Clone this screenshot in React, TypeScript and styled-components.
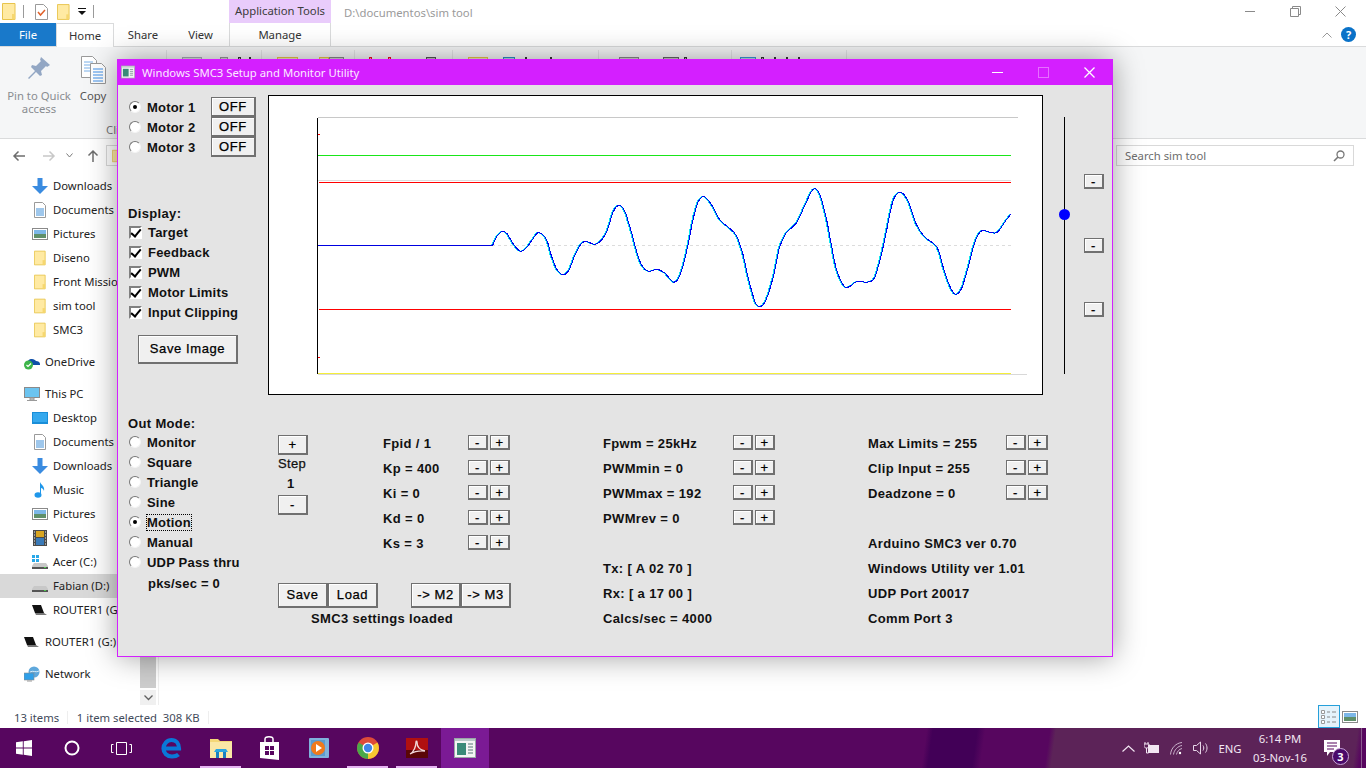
import React from 'react';
import styled, { createGlobalStyle } from 'styled-components';

const UI_FONT = '"Noto Sans", "Open Sans", sans-serif';
const FORM_FONT = '"Liberation Sans", Arial, sans-serif';

// ---------------------------------------------------------------------------
// Global + explorer frame
// ---------------------------------------------------------------------------

const Global = createGlobalStyle`
  html, body { margin: 0; padding: 0; background: #fff; }
  * { box-sizing: border-box; }
`;

const Page = styled.div`
  position: relative;
  width: 1366px;
  height: 768px;
  overflow: hidden;
  display: flex;
  flex-direction: column;
  font-family: ${UI_FONT};
  font-size: 11.3px;
  color: #222;
`;

const Explorer = styled.div`
  flex: 1;
  min-height: 0;
  display: flex;
  flex-direction: column;
  background: #fff;
`;

const QuickBar = styled.div`
  height: 23px;
  display: flex;
  align-items: center;
`;

const QuickIcons = styled.div`
  width: 229px;
  height: 23px;
  padding-left: 2px;
  display: flex;
  align-items: center;
`;

const QuickSlot = styled.span<{ $ml: number }>`
  display: flex;
  margin-left: ${({ $ml }) => $ml}px;
`;

const QuickSep = styled.span<{ $ml: number }>`
  width: 1px;
  height: 13px;
  background: #9a9a9a;
  margin-left: ${({ $ml }) => $ml}px;
`;

const ToolsTab = styled.div`
  width: 102px;
  height: 23px;
  padding-bottom: 2px;
  background: #e9ccfb;
  color: #3c3c3c;
  display: flex;
  align-items: center;
  justify-content: center;
`;

const PathText = styled.div`
  margin: 1px 0 0 13px;
  color: #9a9a9a;
`;

const WinButtons = styled.div`
  margin-left: auto;
  margin-right: 3px;
  display: flex;
`;

const WinButton = styled.div`
  width: 45px;
  height: 23px;
  display: flex;
  align-items: center;
  justify-content: center;
  color: #8a8a8a;
`;

const Tabs = styled.div`
  height: 24px;
  display: flex;
  align-items: stretch;
  border-bottom: 1px solid #dadbdc;
`;

const Tab = styled.div<{ $w: number; $kind?: 'file' | 'active' | 'ctx' }>`
  width: ${({ $w }) => $w}px;
  display: flex;
  align-items: center;
  justify-content: center;
  color: ${({ $kind }) => ($kind === 'file' ? '#fff' : '#333')};
  background: ${({ $kind }) => ($kind === 'file' ? '#1979ca' : '#fff')};
  ${({ $kind }) =>
    $kind === 'active'
      ? 'border: 1px solid #dadbdc; border-bottom: 0; margin-bottom: -1px;'
      : ''}
  ${({ $kind }) =>
    $kind === 'ctx' ? 'border-left: 1px solid #dadbdc; border-right: 1px solid #dadbdc;' : ''}
`;

const TabsRight = styled.div`
  margin-left: auto;
  width: 44px;
  display: flex;
  align-items: center;
  gap: 9px;
`;

const HelpBadge = styled.div`
  width: 15px;
  height: 15px;
  border-radius: 50%;
  background: #0a72c8;
  color: #fff;
  font-size: 11px;
  font-weight: 700;
  line-height: 15px;
  text-align: center;
`;

const Ribbon = styled.div`
  height: 92px;
  display: flex;
  background: #f5f6f7;
  border-bottom: 1px solid #dadbdc;
`;

const RibbonGroup = styled.div<{ $w: number }>`
  position: relative;
  width: ${({ $w }) => $w}px;
  height: 86px;
  margin-top: 3px;
  border-right: 1px solid #e2e3e4;
  display: flex;
  align-items: flex-start;
`;

const RibbonButton = styled.div<{ $w: number }>`
  width: ${({ $w }) => $w}px;
  display: flex;
  flex-direction: column;
  align-items: center;
  text-align: center;
  color: #8a8d91;
  line-height: 13px;
`;

const RibbonIcon = styled.div`
  height: 39px;
  padding-top: 6px;
  display: flex;
  align-items: flex-start;
`;

const RibbonLabel = styled.span<{ $dark?: boolean }>`
  color: ${({ $dark }) => ($dark ? '#555' : '#8a8d91')};
`;

const GroupName = styled.span`
  margin: 72px 0 0 -2px;
  color: #777;
`;

const Peek = styled.span<{ $ml: number; $w: number; $c: string }>`
  margin: 7px 0 0 ${({ $ml }) => $ml}px;
  width: ${({ $w }) => $w}px;
  height: 8px;
  flex: none;
  border: 1px solid ${({ $c }) => $c};
  background: ${({ $c }) => $c}55;
`;

const AddressRow = styled.div`
  height: 33px;
  display: flex;
  align-items: center;
`;

const NavIcons = styled.div`
  width: 106px;
  padding-left: 12px;
  display: flex;
  align-items: center;
`;

const NavSlot = styled.span<{ $ml: number }>`
  display: flex;
  margin-left: ${({ $ml }) => $ml}px;
`;

const FieldBox = styled.div<{ $w: number }>`
  width: ${({ $w }) => $w}px;
  height: 21px;
  border: 1px solid #d9d9d9;
  display: flex;
  align-items: center;
  padding: 0 8px 0 5px;
  color: #6d6d6d;
`;

const SearchText = styled.span`
  margin-left: 3px;
  flex: 1;
`;

const SearchSlot = styled.div`
  margin-left: 8px;
`;

const Body = styled.div`
  flex: 1;
  min-height: 0;
  display: flex;
`;

const Sidebar = styled.div`
  width: 159px;
  display: flex;
  border-right: 1px solid #eeeeee;
`;

const NavList = styled.div`
  width: 140px;
  padding-top: 2px;
  overflow: hidden;
  color: #222;
`;

const NavRow = styled.div<{ $root?: boolean; $selected?: boolean; $gap?: boolean }>`
  height: 24px;
  margin-top: ${({ $gap }) => ($gap ? 8 : 0)}px;
  padding-left: ${({ $root }) => ($root ? 24 : 32)}px;
  display: flex;
  align-items: center;
  gap: 5px;
  white-space: nowrap;
  background: ${({ $selected }) => ($selected ? '#d9d9d9' : 'transparent')};
`;

const NavGlyph = styled.span`
  width: 16px;
  flex: none;
  display: flex;
  justify-content: center;
`;

const NavLabel = styled.span`
  margin-top: -1px;
`;

const ScrollTrack = styled.div`
  width: 16px;
  display: flex;
  flex-direction: column;
`;

const ScrollThumb = styled.div`
  flex: 1;
  margin-bottom: 2px;
  background: #cdcdcd;
`;

const ScrollArrow = styled.div`
  height: 15px;
  background: #f0f0f0;
  color: #606060;
  display: flex;
  align-items: center;
  justify-content: center;
`;

const StatusBar = styled.div`
  height: 23px;
  padding: 1px 0 0 14px;
  display: flex;
  align-items: center;
  color: #3f4a5a;
`;

const StatusCell = styled.span<{ $w: number }>`
  width: ${({ $w }) => $w}px;
  border-right: 1px solid #eeeeee;
  white-space: pre;
  line-height: 13px;
`;

const ViewToggles = styled.div`
  margin: -1px 8px 0 auto;
  display: flex;
  align-items: center;
  gap: 2px;
`;

const ViewActive = styled.div`
  width: 22px;
  height: 23px;
  background: #e5f3fb;
  border: 1px solid #26a0da;
  display: flex;
  align-items: center;
  justify-content: center;
`;

// ---------------------------------------------------------------------------
// Taskbar
// ---------------------------------------------------------------------------

const Taskbar = styled.div`
  height: 40px;
  display: flex;
  color: #fff;
  background: linear-gradient(
    98deg,
    #57065f 0,
    #57065f 918px,
    #420057 924px,
    #420057 968px,
    #57065f 976px,
    #57065f 1040px,
    #5c2358 1046px,
    #5c2358 1345px,
    #57065f 1351px
  );
`;

const TaskCell = styled.div<{ $w: number; $active?: boolean; $bar?: boolean }>`
  position: relative;
  width: ${({ $w }) => $w}px;
  display: flex;
  align-items: center;
  justify-content: center;
  background: ${({ $active }) => ($active ? '#7b1a95' : 'transparent')};
  &::after {
    content: '';
    display: ${({ $bar }) => ($bar ? 'block' : 'none')};
    position: absolute;
    left: 4px;
    right: 4px;
    bottom: 0;
    height: 2px;
    background: #e6b3f2;
  }
`;

const Tray = styled.div`
  margin-left: auto;
  display: flex;
`;

const TrayText = styled.div`
  width: 36px;
  display: flex;
  align-items: center;
  justify-content: center;
  color: #f2e6f2;
`;

const Clock = styled.div`
  width: 64px;
  display: flex;
  flex-direction: column;
  align-items: center;
  justify-content: center;
  line-height: 19px;
  color: #f2e6f2;
`;

const NotifyCell = styled.div`
  position: relative;
  width: 49px;
  padding-left: 12px;
  display: flex;
  align-items: center;
`;

const NotifyBadge = styled.span`
  position: absolute;
  left: 20px;
  top: 20px;
  width: 17px;
  height: 17px;
  border-radius: 50%;
  background: #4a0a6a;
  border: 1px solid #c9a6d8;
  color: #fff;
  font-size: 11px;
  font-weight: 700;
  line-height: 15px;
  text-align: center;
`;

const DesktopEdge = styled.div`
  width: 5px;
  border-left: 1px solid #8a5a8e;
`;

// ---------------------------------------------------------------------------
// SMC3 window
// ---------------------------------------------------------------------------

const AppWindow = styled.div`
  position: absolute;
  left: 117px;
  top: 59px;
  width: 996px;
  height: 598px;
  display: flex;
  flex-direction: column;
  border: 1px solid #d41fff;
  border-top: 0;
  background: #e4e4e4;
  box-shadow: 0 0 28px rgba(0, 0, 0, 0.38);
  font-family: ${FORM_FONT};
  font-size: 13px;
  font-weight: 700;
  letter-spacing: 0.35px;
  color: #111;
`;

const TitleBar = styled.div`
  height: 26px;
  margin: 0 -1px;
  background: #d41fff;
  color: #fbeaff;
  display: flex;
  align-items: center;
  padding-left: 4px;
  font-family: ${UI_FONT};
  font-size: 11.3px;
  font-weight: 400;
  letter-spacing: 0;
`;

const TitleText = styled.span`
  margin-left: 7px;
`;

const TitleButtons = styled.div`
  margin-left: auto;
  margin-right: 1px;
  display: flex;
`;

const TitleButton = styled.div`
  width: 46px;
  height: 26px;
  display: flex;
  align-items: center;
  justify-content: center;
`;

const Client = styled.div`
  flex: 1;
  padding: 10px 0 0 10px;
  display: flex;
  flex-direction: column;
`;

const TopArea = styled.div`
  height: 300px;
  display: flex;
`;

const LeftPanel = styled.div`
  width: 140px;
  padding-top: 2px;
  display: flex;
  flex-direction: column;
`;

const MotorRow = styled.div`
  height: 20px;
  display: flex;
  align-items: center;
  justify-content: space-between;
  padding-right: 12px;
`;

const Choice = styled.label`
  height: 20px;
  padding-left: 1px;
  display: flex;
  align-items: center;
  gap: 6px;
  white-space: nowrap;
  letter-spacing: 0.2px;
`;

const Radio = styled.input.attrs({ type: 'radio', readOnly: true })`
  appearance: none;
  position: relative;
  flex: none;
  width: 12px;
  height: 12px;
  margin: 0;
  border-radius: 50%;
  background: #fff;
  border: 1px solid;
  border-color: #777 #f4f4f4 #f4f4f4 #777;
  &:checked::after {
    content: '';
    position: absolute;
    left: 3px;
    top: 3px;
    width: 4px;
    height: 4px;
    border-radius: 50%;
    background: #000;
  }
`;

const Check = styled.input.attrs({ type: 'checkbox', readOnly: true })`
  appearance: none;
  position: relative;
  flex: none;
  width: 13px;
  height: 13px;
  margin: 0;
  background: #fff;
  border: 2px solid;
  border-color: #808080 #fff #fff #808080;
  &:checked::after {
    content: '';
    position: absolute;
    left: 2px;
    top: -1px;
    width: 4px;
    height: 8px;
    border: solid #000;
    border-width: 0 2px 2px 0;
    transform: rotate(40deg);
  }
`;

const Focused = styled.span`
  outline: 1px dotted #000;
  outline-offset: 0;
`;

const Heading = styled.div<{ $mt?: number }>`
  height: 16px;
  line-height: 18px;
  margin-top: ${({ $mt }) => $mt ?? 0}px;
  margin-bottom: 1px;
`;

const Bevel = styled.button<{ $w: number; $h: number; $ml?: number; $mt?: number }>`
  flex: none;
  width: ${({ $w }) => $w}px;
  height: ${({ $h }) => $h}px;
  margin: ${({ $mt }) => $mt ?? 0}px 0 0 ${({ $ml }) => $ml ?? 0}px;
  padding: 0 0 1px;
  background: #f0f0f0;
  border: solid #707070;
  border-width: 1px 2px 2px 1px;
  box-shadow: inset 1px 1px 0 #fff;
  font: inherit;
  font-weight: 400;
  letter-spacing: 0.6px;
  color: #000;
  line-height: 1;
  -webkit-text-stroke: 0.25px #000;
`;

const Plot = styled.div`
  width: 775px;
  height: 300px;
  border: 1px solid #000;
  background: #fff;
  display: flex;
`;

const Rail = styled.div`
  padding: 22px 0 0 21px;
  display: flex;
`;

const SliderTrack = styled.div`
  position: relative;
  width: 1px;
  height: 257px;
  background: #000;
`;

const SliderKnob = styled.div`
  position: absolute;
  left: -5px;
  top: 92px;
  width: 11px;
  height: 11px;
  border-radius: 50%;
  background: #0000ff;
`;

const RailButtons = styled.div`
  margin-left: 19px;
  padding-top: 57px;
  display: flex;
  flex-direction: column;
  gap: 49px;
`;

const BottomArea = styled.div`
  margin-top: 20px;
  display: flex;
`;

const ModeColumn = styled.div`
  width: 150px;
  display: flex;
  flex-direction: column;
`;

const PacketLine = styled.div`
  height: 22px;
  padding: 4px 0 0 20px;
  line-height: 16px;
  letter-spacing: 0.2px;
`;

const MiddleBlock = styled.div`
  width: 325px;
  padding-top: 20px;
  display: flex;
  flex-direction: column;
`;

const TuneArea = styled.div`
  display: flex;
  height: 148px;
`;

const StepColumn = styled.div`
  width: 105px;
  display: flex;
  flex-direction: column;
`;

const StepLabel = styled.div`
  height: 16px;
  line-height: 18px;
  font-weight: 400;
  -webkit-text-stroke: 0.25px #111;
`;

const StepValue = styled.div`
  height: 24px;
  line-height: 26px;
  padding-left: 9px;
`;

const Column = styled.div<{ $w?: number; $top?: number }>`
  width: ${({ $w }) => ($w ? `${$w}px` : 'auto')};
  padding-top: ${({ $top }) => $top ?? 0}px;
  display: flex;
  flex-direction: column;
`;

const ValueRow = styled.div<{ $labelW: number }>`
  height: 25px;
  display: grid;
  grid-template-columns: ${({ $labelW }) => $labelW}px 20px 20px;
  align-items: start;
  & > span {
    line-height: 18px;
    white-space: nowrap;
  }
  & > button:last-child {
    margin-left: 2px;
  }
`;

const InfoRow = styled.div`
  height: 25px;
  line-height: 18px;
  white-space: nowrap;
`;

const Spacer = styled.div`
  height: 25px;
`;

const ActionRow = styled.div`
  display: flex;
`;

const StatusLine = styled.div`
  height: 20px;
  line-height: 22px;
  padding-left: 33px;
`;

// ---------------------------------------------------------------------------
// Data
// ---------------------------------------------------------------------------

// traced from the capture, in page pixels
const fromLeft = (p: number[][]) => p.map(([x, y]) => [270 + x / 3, 90 + y / 3]);
const fromRight = (p: number[][]) => p.map(([x, y]) => [660 + x / 3, 90 + y / 3]);

const WAVE = [
  ...fromLeft([
    [668, 466], [680, 440], [698, 424], [712, 432], [730, 462], [752, 484], [772, 470],
    [790, 445], [806, 428], [830, 450], [845, 500], [862, 540], [880, 554], [897, 540],
    [915, 495], [935, 460], [950, 455], [975, 463], [995, 450], [1012, 420], [1030, 365],
    [1048, 346], [1065, 365], [1085, 430], [1100, 485], [1115, 525], [1135, 544],
    [1160, 538], [1180, 546],
  ]),
  ...fromRight([
    [20, 555], [40, 576], [55, 566], [70, 525], [85, 460], [100, 385], [115, 335], [133, 320],
    [155, 345], [180, 390], [205, 412], [228, 435], [248, 490], [265, 565], [285, 635],
    [300, 650], [318, 630], [340, 560], [358, 475], [378, 430], [410, 398], [435, 345],
    [460, 298], [480, 315], [500, 390], [515, 470], [530, 540], [553, 589], [570, 589],
    [590, 575], [625, 576], [645, 560], [665, 490], [680, 420], [700, 330], [722, 307],
    [745, 335], [770, 405], [795, 442], [820, 460], [835, 480], [855, 550], [875, 600],
    [888, 613], [905, 595], [925, 530], [945, 455], [965, 422], [990, 427], [1012, 427],
    [1035, 395], [1052, 373],
  ]),
];

function smoothPath(pts: number[][]): string {
  let d = `M${pts[0][0]} ${pts[0][1]}`;
  for (let i = 0; i < pts.length - 1; i++) {
    const p0 = pts[Math.max(i - 1, 0)];
    const p1 = pts[i];
    const p2 = pts[i + 1];
    const p3 = pts[Math.min(i + 2, pts.length - 1)];
    const c1 = [p1[0] + (p2[0] - p0[0]) / 6, p1[1] + (p2[1] - p0[1]) / 6];
    const c2 = [p2[0] - (p3[0] - p1[0]) / 6, p2[1] - (p3[1] - p1[1]) / 6];
    d += `C${c1[0].toFixed(1)} ${c1[1].toFixed(1)} ${c2[0].toFixed(1)} ${c2[1].toFixed(1)} ${p2[0].toFixed(1)} ${p2[1].toFixed(1)}`;
  }
  return d;
}

const WAVE_PATH = smoothPath(WAVE);

const NAV_ITEMS: { icon: string; label: string; root?: boolean; gap?: boolean; selected?: boolean }[] = [
  { icon: 'down', label: 'Downloads' },
  { icon: 'doc', label: 'Documents' },
  { icon: 'pic', label: 'Pictures' },
  { icon: 'folder', label: 'Diseno' },
  { icon: 'folder', label: 'Front Mission' },
  { icon: 'folder', label: 'sim tool' },
  { icon: 'folder', label: 'SMC3' },
  { icon: 'cloud', label: 'OneDrive', root: true, gap: true },
  { icon: 'pc', label: 'This PC', root: true, gap: true },
  { icon: 'desktop', label: 'Desktop' },
  { icon: 'doc', label: 'Documents' },
  { icon: 'down', label: 'Downloads' },
  { icon: 'music', label: 'Music' },
  { icon: 'pic', label: 'Pictures' },
  { icon: 'video', label: 'Videos' },
  { icon: 'sysdrive', label: 'Acer (C:)' },
  { icon: 'drive', label: 'Fabian (D:)', selected: true },
  { icon: 'router', label: 'ROUTER1 (G:)' },
  { icon: 'router', label: 'ROUTER1 (G:)', root: true, gap: true },
  { icon: 'net', label: 'Network', root: true, gap: true },
];

const PEEKS: { w: number; items: { ml: number; w: number; c: string }[] }[] = [
  { w: 95, items: [{ ml: 15, w: 20, c: '#a8adb5' }, { ml: 18, w: 8, c: '#9a9a9a' }, { ml: 10, w: 3, c: '#333333' }, { ml: 8, w: 2, c: '#333333' }] },
  { w: 93, items: [{ ml: 15, w: 21, c: '#e8c44c' }, { ml: 21, w: 10, c: '#e8c44c' }, { ml: 0, w: 15, c: '#8a8a8a' }] },
  { w: 98, items: [{ ml: 14, w: 3, c: '#e81123' }, { ml: 16, w: 3, c: '#e81123' }, { ml: 35, w: 10, c: '#555555' }] },
  { w: 146, items: [{ ml: 15, w: 20, c: '#e8c44c' }, { ml: 15, w: 12, c: '#2f8fc4' }, { ml: 10, w: 2, c: '#333333' }, { ml: 23, w: 2, c: '#333333' }] },
  { w: 133, items: [{ ml: 20, w: 20, c: '#8a8a8a' }, { ml: 24, w: 16, c: '#666666' }, { ml: 5, w: 3, c: '#333333' }] },
  { w: 115, items: [{ ml: 8, w: 16, c: '#3c9ad6' }, { ml: 5, w: 3, c: '#333333' }, { ml: 10, w: 2, c: '#333333' }, { ml: 10, w: 2, c: '#333333' }, { ml: 10, w: 2, c: '#333333' }] },
];

const PID_ROWS = ['Fpid / 1', 'Kp = 400', 'Ki = 0', 'Kd = 0', 'Ks = 3'];
const PWM_ROWS = ['Fpwm = 25kHz', 'PWMmin = 0', 'PWMmax = 192', 'PWMrev = 0'];
const LIMIT_ROWS = ['Max Limits = 255', 'Clip Input = 255', 'Deadzone = 0'];
const MODES = ['Monitor', 'Square', 'Triangle', 'Sine', 'Motion', 'Manual', 'UDP Pass thru'];
const DISPLAY = ['Target', 'Feedback', 'PWM', 'Motor Limits', 'Input Clipping'];

// ---------------------------------------------------------------------------
// Drawings
// ---------------------------------------------------------------------------

const FolderIcon = ({ w = 14, h = 17 }: { w?: number; h?: number }) => (
  <svg width={w} height={h} viewBox="0 0 14 17">
    <path d="M.5.5h12.5v16H.5z" fill="#ffeaa3" stroke="#e8c44c" />
    <path d="M10 11h3v5.500h-3z" fill="#f6d76f" />
  </svg>
);

const DocLines = () => (
  <g stroke="#3f8fd8">
    <path d="M4 7h8M4 9h8M4 11h8M4 13h8" />
  </g>
);

const NavIcon = ({ kind }: { kind: string }) => {
  switch (kind) {
    case 'down':
      return (
        <svg width="16" height="16" viewBox="0 0 16 16">
          <path d="M5.500 0h5v8H16l-8 8-8-8h5.500z" fill="#3a8be0" />
        </svg>
      );
    case 'doc':
      return (
        <svg width="16" height="16" viewBox="0 0 16 16">
          <path d="M2.500.5h8l3 3v12h-11z" fill="#fff" stroke="#9a9a9a" />
          <DocLines />
        </svg>
      );
    case 'pic':
      return (
        <svg width="16" height="16" viewBox="0 0 16 16">
          <rect x=".5" y="2.500" width="15" height="11" fill="#fff" stroke="#8a8a8a" />
          <rect x="2" y="4" width="12" height="4" fill="#7cb7e8" />
          <rect x="2" y="8" width="12" height="4" fill="#5f8f6a" />
        </svg>
      );
    case 'folder':
      return <FolderIcon w={12} h={16} />;
    case 'cloud':
      return (
        <svg width="16" height="16" viewBox="0 0 16 16">
          <path d="M3 10c0-3 2-5 5-5 2 0 3 1 4 2 2 0 4 1 4 3v1H3z" fill="#0f4fa8" />
          <circle cx="4.500" cy="11" r="4.500" fill="#3db54a" />
          <path d="M2.500 11l1.500 1.500 3-3" fill="none" stroke="#fff" strokeWidth="1.200" />
        </svg>
      );
    case 'pc':
      return (
        <svg width="16" height="16" viewBox="0 0 16 16">
          <rect x=".5" y="1.500" width="15" height="10" fill="#6cc4f0" stroke="#8a8a8a" />
          <path d="M6 12h4v2H6zM3 14.500h10" stroke="#9a9a9a" fill="#cfcfcf" />
        </svg>
      );
    case 'desktop':
      return (
        <svg width="16" height="16" viewBox="0 0 16 16">
          <rect x="0" y="2" width="16" height="12" fill="#1a8ed8" />
          <rect x="1" y="3" width="14" height="9" fill="#36a9ee" />
        </svg>
      );
    case 'music':
      return (
        <svg width="16" height="16" viewBox="0 0 16 16">
          <ellipse cx="6" cy="13" rx="3.500" ry="2.800" fill="#1f97ea" />
          <path d="M8 13V0c1 3 5 4 4 9-.5-2-2-3-3-3v7z" fill="#1f97ea" />
        </svg>
      );
    case 'video':
      return (
        <svg width="16" height="16" viewBox="0 0 16 16">
          <rect x="1" y="0" width="14" height="16" fill="#4a4a4a" />
          <rect x="4" y="1" width="8" height="6" fill="#d9a520" />
          <rect x="4" y="8" width="8" height="7" fill="#3a7ab8" />
          <path d="M2 2h1M2 5h1M2 8h1M2 11h1M2 14h1M13 2h1M13 5h1M13 8h1M13 11h1M13 14h1" stroke="#eee" />
        </svg>
      );
    case 'sysdrive':
      return (
        <svg width="16" height="16" viewBox="0 0 16 16">
          <path d="M0 1h3v3H0zM4 1h3v3H4zM0 5h3v3H0zM4 5h3v3H4z" fill="#29a8e8" />
          <path d="M2 9h12l2 3v3H0v-3z" fill="#c8c8c8" />
          <rect x="0" y="13" width="16" height="2" fill="#555" />
          <rect x="12" y="13" width="2" height="1" fill="#4cd04c" />
        </svg>
      );
    case 'drive':
      return (
        <svg width="16" height="16" viewBox="0 0 16 16">
          <path d="M2 8h12l2 3v3H0v-3z" fill="#c8c8c8" />
          <rect x="0" y="12" width="16" height="2" fill="#555" />
          <rect x="12" y="12" width="2" height="1" fill="#4cd04c" />
        </svg>
      );
    case 'router':
      return (
        <svg width="16" height="16" viewBox="0 0 16 16">
          <path d="M0 3h9l3 8H3z" fill="#111" />
          <path d="M3 11h9l3 2H4z" fill="#777" />
        </svg>
      );
    default:
      return (
        <svg width="16" height="16" viewBox="0 0 16 16">
          <circle cx="10" cy="6" r="5.500" fill="#5fa8dc" />
          <path d="M6 6c3-2 6 1 9-1" stroke="#d8ecf8" fill="none" />
          <rect x="0" y="7" width="10" height="7" fill="#2f9fe8" stroke="#8a8a8a" strokeWidth=".6" />
          <path d="M3 15h5" stroke="#999" />
        </svg>
      );
  }
};

const PinIcon = () => (
  <svg width="24" height="24" viewBox="0 0 24 24">
    <path d="M14 1l9 8-3 2-1-1-5 5 1 4-2 1-4-4-7 7-1-1 7-7-4-4 1-2 4 1 5-5-1-1z" fill="#93a7c4" />
  </svg>
);

const CopyIcon = () => (
  <svg width="25" height="28" viewBox="0 0 25 28">
    <path d="M.5.500h11l4 4v17H.5z" fill="#fff" stroke="#9a9a9a" />
    <path d="M3 6h9M3 9h9M3 12h9M3 15h9" stroke="#7ab0e8" />
    <path d="M9.500 7.500h11l4 4v16h-15z" fill="#fff" stroke="#9a9a9a" />
    <path d="M12 13h10M12 16h10M12 19h10M12 22h10M12 25h10" stroke="#3f8fe8" />
  </svg>
);

const AppIcon = ({ size = 14 }: { size?: number }) => (
  <svg width={size} height={size} viewBox="0 0 22 22">
    <rect x=".5" y="1.500" width="21" height="19" fill="#f4f4f4" stroke="#9aa7a7" />
    <rect x="1" y="2" width="20" height="2" fill="#b9c8c8" />
    <rect x="3" y="6" width="9" height="12" fill="#3a8a78" />
    <path d="M14 7h5M14 10h5M14 13h5M14 16h5" stroke="#8aa0a0" strokeWidth="1.500" />
  </svg>
);

const WindowsLogo = () => (
  <svg width="16" height="16" viewBox="0 0 16 16">
    <path d="M0 2.300l6.800-1v6.200H0zM7.700 1.200L16 0v7.500H7.700zM0 8.400h6.800v6.300L0 13.700zM7.700 8.400H16V16l-8.300-1.200z" fill="#fff" />
  </svg>
);

const EdgeIcon = () => (
  <svg width="21" height="22" viewBox="0 0 21 22">
    <path d="M4 11.500h14c0-5-3-8.500-7.500-8.500S2.500 7 2.500 11.500s3.500 8 8.500 8c2.500 0 5-.7 6.500-2" fill="none" stroke="#0a78d7" strokeWidth="4.200" />
  </svg>
);

const ExplorerIcon = () => (
  <svg width="22" height="20" viewBox="0 0 22 20">
    <path d="M0 1h8l2 2h12v17H0z" fill="#f5d777" />
    <rect x="0" y="4" width="22" height="16" fill="#fbe7a6" />
    <path d="M6 11h10l2 3H4z" fill="#2aa5e0" />
    <rect x="6" y="14" width="3" height="6" fill="#1a7fc0" />
    <rect x="13" y="14" width="3" height="6" fill="#1a7fc0" />
  </svg>
);

const StoreIcon = () => (
  <svg width="21" height="24" viewBox="0 0 21 24">
    <path d="M1 6l19 0v18L1 22z" fill="#fff" />
    <path d="M6 7V3c0-3 8-3 8 0v4" fill="none" stroke="#fff" strokeWidth="1.500" />
    <path d="M6 10h4v4H6zM11 10h4v4h-4zM6 15h4v4H6zM11 15h4v4h-4z" fill="#57065f" />
  </svg>
);

const MediaIcon = () => (
  <svg width="20" height="20" viewBox="0 0 20 20">
    <rect x="0" y="0" width="20" height="20" rx="1" fill="#7fb2dc" />
    <rect x="2" y="2" width="14" height="16" fill="#5a9bd0" />
    <circle cx="9" cy="10" r="7" fill="#f07a1c" />
    <path d="M7 6l6 4-6 4z" fill="#fff" />
  </svg>
);

const ChromeIcon = () => (
  <svg width="22" height="22" viewBox="0 0 22 22">
    <circle cx="11" cy="11" r="11" fill="#dd4b39" />
    <path d="M11 11L1.500 5.500A11 11 0 0 0 11 22z" fill="#4aa84a" />
    <path d="M11 11l0 11A11 11 0 0 0 20.500 5.500z" fill="#f7c831" />
    <circle cx="11" cy="11" r="5.500" fill="#fff" />
    <circle cx="11" cy="11" r="4.200" fill="#3f86e8" />
  </svg>
);

const AcrobatIcon = () => (
  <svg width="22" height="20" viewBox="0 0 22 20">
    <rect width="22" height="20" fill="#b01010" />
    <rect y="12" width="22" height="8" fill="#5a0606" />
    <path d="M4 16c4-2 6-8 6-12 0-1 1-1 1 0 0 5 3 8 8 9-5-.5-10 0-15 3z" fill="none" stroke="#f2dada" strokeWidth="1.300" />
  </svg>
);

const ThinIcon = ({ children, w = 16, h = 16 }: { children: React.ReactNode; w?: number; h?: number }) => (
  <svg width={w} height={h} viewBox={`0 0 ${w} ${h}`} fill="none" stroke="currentColor">
    {children}
  </svg>
);

// ---------------------------------------------------------------------------
// Parts
// ---------------------------------------------------------------------------

const PlotChart = () => (
  <svg width="773" height="298" viewBox="269 96 773 298">
    <g shapeRendering="crispEdges" strokeWidth="1" fill="none">
      <path d="M318 117.500H1018" stroke="#c8c8c8" />
      <path d="M318 155.500H1011" stroke="#19e619" />
      <path d="M318 180.500H1011" stroke="#dddddd" />
      <path d="M319 182.500H1011" stroke="#ff0000" />
      <path d="M492 245.500H1011" stroke="#dcdcdc" strokeDasharray="3 3" />
      <path d="M319 309.500H1011" stroke="#ff0000" />
      <path d="M318 374.500H1027" stroke="#d8d8d8" />
      <path d="M318 373.500H1011" stroke="#f5ee3a" />
      <path d="M318 134.500h2M318 357.500h2" stroke="#ff0000" />
      <path d="M317.500 118V374" stroke="#000" />
      <path d="M318 245.500H493" stroke="#0000e0" />
      <path d={WAVE_PATH} stroke="#14e6f0" transform="translate(-1 0)" />
      <path d={WAVE_PATH} stroke="#0000f0" />
    </g>
  </svg>
);

const ValueRows = ({ rows, labelW }: { rows: string[]; labelW: number }) => (
  <>
    {rows.map((r) => (
      <ValueRow key={r} $labelW={labelW}>
        <span>{r}</span>
        <Bevel $w={20} $h={15}>-</Bevel>
        <Bevel $w={20} $h={15}>+</Bevel>
      </ValueRow>
    ))}
  </>
);

const SmcWindow = () => (
  <AppWindow>
    <TitleBar>
      <AppIcon />
      <TitleText>Windows SMC3 Setup and Monitor Utility</TitleText>
      <TitleButtons>
        <TitleButton>
          <svg width="11" height="11" viewBox="0 0 11 11"><path d="M0 5.500h11" stroke="#fff" /></svg>
        </TitleButton>
        <TitleButton>
          <svg width="11" height="11" viewBox="0 0 11 11"><rect x=".5" y=".5" width="10" height="10" fill="none" stroke="#e66fff" /></svg>
        </TitleButton>
        <TitleButton>
          <svg width="11" height="11" viewBox="0 0 11 11"><path d="M.5.5l10 10M10.500.5l-10 10" stroke="#fff" strokeWidth="1.300" /></svg>
        </TitleButton>
      </TitleButtons>
    </TitleBar>
    <Client>
      <TopArea>
        <LeftPanel>
          {['Motor 1', 'Motor 2', 'Motor 3'].map((m, i) => (
            <MotorRow key={m}>
              <Choice>
                <Radio name="motor" defaultChecked={i === 0} />
                {m}
              </Choice>
              <Bevel $w={45} $h={20}>OFF</Bevel>
            </MotorRow>
          ))}
          <Heading $mt={48}>Display:</Heading>
          {DISPLAY.map((d) => (
            <Choice key={d}>
              <Check defaultChecked />
              {d}
            </Choice>
          ))}
          <Bevel $w={100} $h={29} $ml={10} $mt={13}>Save Image</Bevel>
        </LeftPanel>
        <Plot>
          <PlotChart />
        </Plot>
        <Rail>
          <SliderTrack>
            <SliderKnob />
          </SliderTrack>
          <RailButtons>
            <Bevel $w={20} $h={15}>-</Bevel>
            <Bevel $w={20} $h={15}>-</Bevel>
            <Bevel $w={20} $h={15}>-</Bevel>
          </RailButtons>
        </Rail>
      </TopArea>
      <BottomArea>
        <ModeColumn>
          <Heading>Out Mode:</Heading>
          {MODES.map((m) => (
            <Choice key={m}>
              <Radio name="mode" defaultChecked={m === 'Motion'} />
              {m === 'Motion' ? <Focused>{m}</Focused> : m}
            </Choice>
          ))}
          <PacketLine>pks/sec = 0</PacketLine>
        </ModeColumn>
        <MiddleBlock>
          <TuneArea>
            <StepColumn>
              <Bevel $w={30} $h={20}>+</Bevel>
              <StepLabel>Step</StepLabel>
              <StepValue>1</StepValue>
              <Bevel $w={30} $h={20}>-</Bevel>
            </StepColumn>
            <Column>
              <ValueRows rows={PID_ROWS} labelW={85} />
            </Column>
          </TuneArea>
          <ActionRow>
            <Bevel $w={50} $h={25}>Save</Bevel>
            <Bevel $w={50} $h={25}>Load</Bevel>
            <Bevel $w={50} $h={25} $ml={33}>-&gt; M2</Bevel>
            <Bevel $w={50} $h={25}>-&gt; M3</Bevel>
          </ActionRow>
          <StatusLine>SMC3 settings loaded</StatusLine>
        </MiddleBlock>
        <Column $w={265} $top={20}>
          <ValueRows rows={PWM_ROWS} labelW={130} />
          <Spacer />
          <InfoRow>Tx: [ A 02 70 ]</InfoRow>
          <InfoRow>Rx: [ a 17 00 ]</InfoRow>
          <InfoRow>Calcs/sec = 4000</InfoRow>
        </Column>
        <Column $top={20}>
          <ValueRows rows={LIMIT_ROWS} labelW={138} />
          <Spacer />
          <InfoRow>Arduino SMC3 ver 0.70</InfoRow>
          <InfoRow>Windows Utility ver 1.01</InfoRow>
          <InfoRow>UDP Port 20017</InfoRow>
          <InfoRow>Comm Port 3</InfoRow>
        </Column>
      </BottomArea>
    </Client>
  </AppWindow>
);

export default function App() {
  return (
    <Page>
      <Global />
      <Explorer>
        <QuickBar>
          <QuickIcons>
            <QuickSlot $ml={0}><FolderIcon /></QuickSlot>
            <QuickSep $ml={7} />
            <QuickSlot $ml={11}>
              <svg width="13" height="16" viewBox="0 0 13 16">
                <path d="M.5.5h8l4 4v11H.5z" fill="#fff" stroke="#9a9a9a" />
                <path d="M3 8l2.500 3L10 6" fill="none" stroke="#e0612a" strokeWidth="1.500" />
              </svg>
            </QuickSlot>
            <QuickSlot $ml={9}><FolderIcon w={13} h={16} /></QuickSlot>
            <QuickSlot $ml={8}>
              <svg width="8" height="7" viewBox="0 0 8 7">
                <path d="M0 0h8v1H0zM0 3h8L4 7z" fill="#111" />
              </svg>
            </QuickSlot>
            <QuickSep $ml={7} />
          </QuickIcons>
          <ToolsTab>Application Tools</ToolsTab>
          <PathText>D:\documentos\sim tool</PathText>
          <WinButtons>
            <WinButton><ThinIcon w={11} h={11}><path d="M0 5.500h10" /></ThinIcon></WinButton>
            <WinButton>
              <ThinIcon w={11} h={11}><path d="M.5 2.500h8v8h-8zM2.500 2.500v-2h8v8h-2" /></ThinIcon>
            </WinButton>
            <WinButton><ThinIcon w={11} h={11}><path d="M.5.5l10 10M10.500.5l-10 10" /></ThinIcon></WinButton>
          </WinButtons>
        </QuickBar>
        <Tabs>
          <Tab $w={56} $kind="file">File</Tab>
          <Tab $w={58} $kind="active">Home</Tab>
          <Tab $w={58}>Share</Tab>
          <Tab $w={57}>View</Tab>
          <Tab $w={102} $kind="ctx">Manage</Tab>
          <TabsRight>
            <ThinIcon w={10} h={6}><path d="M.5 5.500L5 1l4.500 4.500" stroke="#999" /></ThinIcon>
            <HelpBadge>?</HelpBadge>
          </TabsRight>
        </Tabs>
        <Ribbon>
          <RibbonGroup $w={167}>
            <RibbonButton $w={78}>
              <RibbonIcon><PinIcon /></RibbonIcon>
              Pin to Quick
              <br />
              access
            </RibbonButton>
            <RibbonButton $w={30}>
              <RibbonIcon><CopyIcon /></RibbonIcon>
              <RibbonLabel $dark>Copy</RibbonLabel>
            </RibbonButton>
            <GroupName>Cli</GroupName>
          </RibbonGroup>
          {PEEKS.map((g, i) => (
            <RibbonGroup key={i} $w={g.w}>
              {g.items.map((p, j) => (
                <Peek key={j} $ml={p.ml} $w={p.w} $c={p.c} />
              ))}
            </RibbonGroup>
          ))}
        </Ribbon>
        <AddressRow>
          <NavIcons>
            <NavSlot $ml={0}>
              <ThinIcon w={14} h={12}><path d="M13 6H2M6.500 1.500L2 6l4.500 4.500" stroke="#6d6d6d" strokeWidth="1.500" /></ThinIcon>
            </NavSlot>
            <NavSlot $ml={16}>
              <ThinIcon w={14} h={12}><path d="M1 6h11M7.500 1.500L12 6l-4.500 4.500" stroke="#c8c8c8" strokeWidth="1.500" /></ThinIcon>
            </NavSlot>
            <NavSlot $ml={10}>
              <ThinIcon w={7} h={5}><path d="M.5.5L3.500 4l3-3.500" stroke="#7a7a7a" /></ThinIcon>
            </NavSlot>
            <NavSlot $ml={14}>
              <ThinIcon w={12} h={14}><path d="M6 13V2M1.500 6.500L6 2l4.500 4.500" stroke="#6d6d6d" strokeWidth="1.500" /></ThinIcon>
            </NavSlot>
          </NavIcons>
          <FieldBox $w={1002}><FolderIcon w={10} h={16} /></FieldBox>
          <SearchSlot>
            <FieldBox $w={238}>
              <SearchText>Search sim tool</SearchText>
              <ThinIcon w={12} h={12}><circle cx="7.500" cy="4.500" r="3.500" stroke="#777" strokeWidth="1.300" /><path d="M5 7l-4 4" stroke="#777" strokeWidth="1.600" /></ThinIcon>
            </FieldBox>
          </SearchSlot>
        </AddressRow>
        <Body>
          <Sidebar>
            <NavList>
              {NAV_ITEMS.map((n, i) => (
                <NavRow key={i} $root={n.root} $gap={n.gap} $selected={n.selected}>
                  <NavGlyph><NavIcon kind={n.icon} /></NavGlyph>
                  <NavLabel>{n.label}</NavLabel>
                </NavRow>
              ))}
            </NavList>
            <ScrollTrack>
              <ScrollThumb />
              <ScrollArrow>
                <ThinIcon w={9} h={6}><path d="M.5.5L4.500 4.500 8.500.5" strokeWidth="1.300" /></ThinIcon>
              </ScrollArrow>
            </ScrollTrack>
          </Sidebar>
        </Body>
        <StatusBar>
          <StatusCell $w={54}>13 items</StatusCell>
          <StatusCell $w={141}>{'   1 item selected  308 KB'}</StatusCell>
          <ViewToggles>
            <ViewActive>
              <svg width="16" height="14" viewBox="0 0 16 14">
                <path d="M.5.5h3v3h-3zM.5 5.500h3v3h-3zM.5 10.500h3v3h-3z" fill="#fff" stroke="#999" />
                <path d="M6 2h3M11 2h4M6 7h3M11 7h4M6 12h3M11 12h4" stroke="#888" />
              </svg>
            </ViewActive>
            <NavIcon kind="pic" />
          </ViewToggles>
        </StatusBar>
      </Explorer>
      <Taskbar>
        <TaskCell $w={48}><WindowsLogo /></TaskCell>
        <TaskCell $w={48}>
          <svg width="16" height="16" viewBox="0 0 16 16"><circle cx="8" cy="8" r="6.500" fill="none" stroke="#fff" strokeWidth="2" /></svg>
        </TaskCell>
        <TaskCell $w={51}>
          <ThinIcon w={21} h={13}><path d="M5.500.5h10v12h-10zM2.500 2.500H.5v8h2M18.500 2.500h2v8h-2" stroke="#fff" /></ThinIcon>
        </TaskCell>
        <TaskCell $w={49}><EdgeIcon /></TaskCell>
        <TaskCell $w={49} $bar><ExplorerIcon /></TaskCell>
        <TaskCell $w={49}><StoreIcon /></TaskCell>
        <TaskCell $w={49}><MediaIcon /></TaskCell>
        <TaskCell $w={49} $bar><ChromeIcon /></TaskCell>
        <TaskCell $w={49} $bar><AcrobatIcon /></TaskCell>
        <TaskCell $w={48} $active><AppIcon size={22} /></TaskCell>
        <Tray>
          <TaskCell $w={24}>
            <ThinIcon w={13} h={7}><path d="M.5 6.500l6-5.500 6 5.500" stroke="#f2e6f2" strokeWidth="1.200" /></ThinIcon>
          </TaskCell>
          <TaskCell $w={24}>
            <svg width="16" height="12" viewBox="0 0 16 12">
              <rect x="4" y="3" width="11" height="8" fill="#f2e6f2" />
              <path d="M0 2h5v2c0 1-1 2-2.500 2S0 5 0 4zM1 0v2M4 0v2M2.500 6v5h2" stroke="#f2e6f2" fill="none" />
            </svg>
          </TaskCell>
          <TaskCell $w={25}>
            <ThinIcon w={13} h={13}><path d="M.5 12.500C1 6 6 1 12 .5M3.500 12.500C4 8 8 4 12 3.500M6.500 12.500C7 10 9 7 12 6.500" stroke="#c9b2cb" /><circle cx="10" cy="11" r="1.200" fill="#fff" stroke="none" /></ThinIcon>
          </TaskCell>
          <TaskCell $w={23}>
            <ThinIcon w={16} h={14}><path d="M.5 4.500h3l4-3.500v12l-4-3.500h-3zM10 4.500c1 1.500 1 3.500 0 5M12.500 2.500c2 2.500 2 6.500 0 9" stroke="#e8d8ea" /></ThinIcon>
          </TaskCell>
          <TrayText>ENG</TrayText>
          <Clock>
            <span>6:14 PM</span>
            <span>03-Nov-16</span>
          </Clock>
          <NotifyCell>
            <svg width="16" height="17" viewBox="0 0 16 17">
              <path d="M0 0h16v12H6l-3 4v-4H0z" fill="#fff" />
              <path d="M3 3h10M3 6h10M3 9h7" stroke="#57065f" />
            </svg>
            <NotifyBadge>3</NotifyBadge>
          </NotifyCell>
          <DesktopEdge />
        </Tray>
      </Taskbar>
      <SmcWindow />
    </Page>
  );
}
